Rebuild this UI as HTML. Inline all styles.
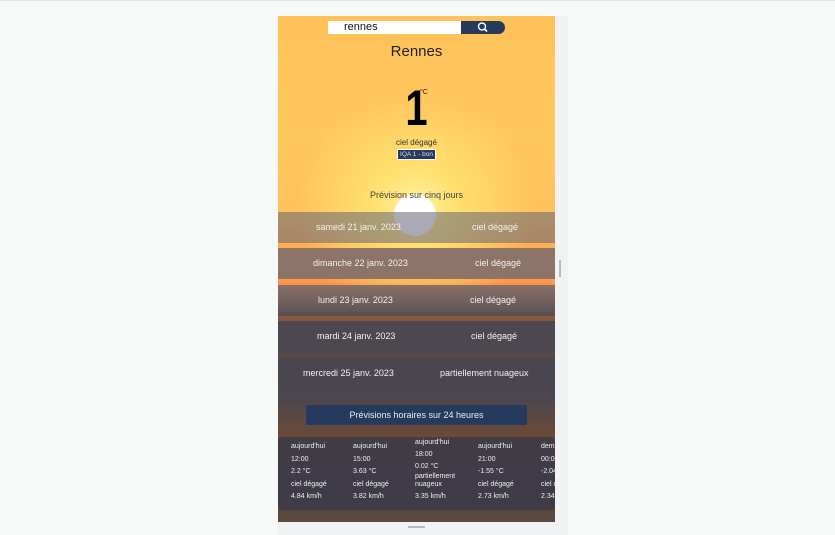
<!DOCTYPE html>
<html><head><meta charset="utf-8"><style>
*{margin:0;padding:0;box-sizing:border-box}
body{width:835px;height:534px;background:#f7f8f8;position:relative;overflow:hidden;font-family:"Liberation Sans","DejaVu Sans",sans-serif;border-top:1px solid #e2e4e8}
.side{position:absolute;left:278px;top:15px;width:290px;height:519px;background:#f1f2f3}
.app{position:absolute;left:278px;top:15px;width:277px;height:506px;overflow:hidden;
background:
radial-gradient(ellipse 120px 110px at 137px 190px,#fff0a0 0%,#ffe070 35%,rgba(255,205,95,0) 100%),
linear-gradient(#ffc15a 0px,#ffc85e 120px,#ffc05c 200px,#ffa650 240px,#ff9a4c 265px,#8a5a3a 300px,#5a4a48 330px,#4b4650 380px,#6a4a38 420px,#4a4048 470px,#5a4a40 500px);}
.abs{position:absolute}
.search{left:50px;top:5px;width:133px;height:13px;background:#fff;font-size:11px;color:#111;padding-left:16px;line-height:13px}
.sbtn{left:183px;top:5px;width:44px;height:13px;background:#263a5e;border-radius:0 7px 7px 0}
.c{left:0;width:277px;text-align:center}
.row{position:absolute;left:0;width:277px;height:31px;color:#f3f0ee;font-size:9px;line-height:31px;z-index:2}
.row span{position:absolute;top:0;white-space:nowrap}
.hr{position:absolute;font-size:7px;color:#eee;line-height:12.5px;white-space:nowrap;z-index:3}
</style></head><body>
<div class="side"></div>
<div class="abs" style="left:559px;top:259px;width:2px;height:17px;background:#bbb"></div>
<div class="abs" style="left:408px;top:525px;width:17px;height:2px;background:#bbb"></div>
<div class="app">
<div class="abs search">rennes</div>
<div class="abs sbtn"><svg width="44" height="13"><circle cx="21" cy="5.5" r="3.5" fill="none" stroke="#fff" stroke-width="1.4"/><line x1="23.5" y1="8" x2="26" y2="10.5" stroke="#fff" stroke-width="1.6"/></svg></div>
<div class="abs c" style="top:27px;font-size:15px;color:#222">Rennes</div>
<div class="abs" style="left:116px;top:178px;width:42px;height:42px;border-radius:50%;background:#fff;z-index:1"></div>
<div class="abs c" style="top:62px;font-size:50px;font-weight:bold;color:#000;line-height:60px;transform:scaleX(.8)">1</div>
<div class="abs" style="left:142px;top:73px;font-size:7px;color:#222">°C</div>
<div class="abs c" style="top:122px;font-size:8px;color:#333">ciel dégagé</div>
<div class="abs" style="left:119px;top:133px;width:39px;height:11px;background:#263a5e;border:1px solid #fff;color:#dde;font-size:6.5px;text-align:center;line-height:9px">IQA 1 - bon</div>
<div class="abs c" style="top:174px;font-size:9px;color:#444;z-index:2">Prévision sur cinq jours</div>
<div class="row" style="top:196px;background:rgba(100,100,120,.55)"><span style="left:38px">samedi 21 janv. 2023</span><span style="left:194px">ciel dégagé</span></div>
<div class="row" style="top:232px;background:#8c7468"><span style="left:35px">dimanche 22 janv. 2023</span><span style="left:197px">ciel dégagé</span></div>
<div class="row" style="top:269px;background:linear-gradient(#8a7068,#6a5a5c 70%,#5a4c50)"><span style="left:40px">lundi 23 janv. 2023</span><span style="left:192px">ciel dégagé</span></div>
<div class="row" style="top:305px;background:#4d4850"><span style="left:39px">mardi 24 janv. 2023</span><span style="left:193px">ciel dégagé</span></div>
<div class="row" style="top:342px;background:#4a4650"><span style="left:25px">mercredi 25 janv. 2023</span><span style="left:162px">partiellement nuageux</span></div>
<div class="abs" style="left:28px;top:389px;width:221px;height:20px;background:#263a5e;border-radius:2px;color:#e8ecf4;font-size:9px;text-align:center;line-height:20px">Prévisions horaires sur 24 heures</div>
<div class="abs" style="left:0;top:421px;width:277px;height:73px;background:rgba(60,58,72,.85);border-radius:4px"></div>
<div class="hr" style="left:13px;top:425px">aujourd'hui<br>12:00<br>2.2 °C<br>ciel dégagé<br>4.84 km/h</div>
<div class="hr" style="left:75px;top:425px">aujourd'hui<br>15:00<br>3.63 °C<br>ciel dégagé<br>3.82 km/h</div>
<div class="hr" style="left:137px;top:421px;line-height:12px">aujourd'hui<br>18:00<br>0.02 °C<br><span style="line-height:8px;display:inline-block">partiellement<br>nuageux</span><br>3.35 km/h</div>
<div class="hr" style="left:200px;top:425px">aujourd'hui<br>21:00<br>-1.55 °C<br>ciel dégagé<br>2.73 km/h</div>
<div class="hr" style="left:263px;top:425px">demain<br>00:00<br>-2.04 °C<br>ciel dégagé<br>2.34 km/h</div>
</div>
</body></html>
